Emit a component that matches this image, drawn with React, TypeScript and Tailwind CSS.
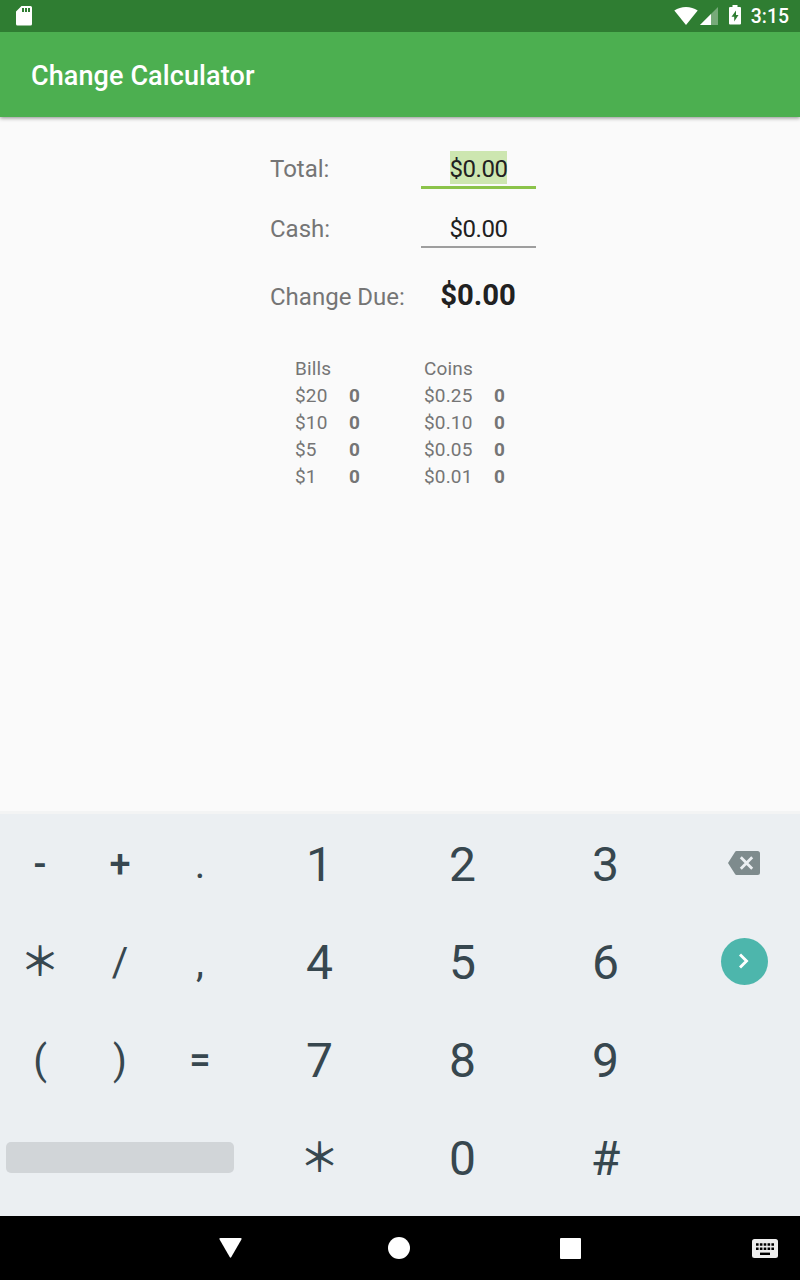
import type { ReactNode } from 'react'

const bills = ['$20', '$10', '$5', '$1']
const coins = ['$0.25', '$0.10', '$0.05', '$0.01']

const symbolRows = [
  ['-', '+', '.'],
  ['＊', '/', ','],
  ['(', ')', '='],
]

const digitRows = [
  ['1', '2', '3'],
  ['4', '5', '6'],
  ['7', '8', '9'],
  ['＊', '0', '#'],
]

function StatusBar() {
  return (
    <div className="h-8 bg-[#2f7d32] flex items-center justify-between pl-4 pr-[11px] text-white relative z-10">
      <svg className="w-4 h-5" viewBox="0 0 16 20" fill="currentColor">
        <path fillRule="evenodd" d="M5.5 0H14.5Q16 0 16 1.5V18Q16 19.6 14.5 19.6H1.5Q0 19.6 0 18V5.5ZM6 2V6H8V2ZM9 2V6H11V2ZM12 2V6H14V2Z" />
      </svg>
      <div className="flex items-center">
        <svg className="w-[24px] h-[18px]" viewBox="0 0 24 18" fill="currentColor">
          <path d="M12 18L.3 3.6Q5.5 0 12 0T23.7 3.6Z" />
        </svg>
        <svg className="w-[18px] h-[18px] ml-[2px]" viewBox="0 0 18 18" fill="currentColor">
          <path d="M0 18L18 0V18Z" opacity=".35" />
          <path d="M0 18L11 7V18Z" />
        </svg>
        <svg className="w-[12px] h-5 ml-[11px] mr-[10px] mb-[2px]" viewBox="0 0 12 20" fill="currentColor">
          <path fillRule="evenodd" d="M3.5 0H8.5V2H11Q12 2 12 3V18.5Q12 19.5 11 19.5H1Q0 19.5 0 18.5V3Q0 2 1 2H3.5ZM7 5.5L2.5 11.8H5.2V16.5L9.5 10H7Z" />
        </svg>
        <span className="text-[19.4px] leading-8 font-medium pt-px">3:15</span>
      </div>
    </div>
  )
}

function Breakdown({ title, items, labelWidth }: { title: string; items: string[]; labelWidth: string }) {
  return (
    <div className="text-[19px] leading-[27px] text-[#757575] tracking-[0.15px]">
      <div>{title}</div>
      {items.map((item) => (
        <div key={item} className="flex">
          <span className={labelWidth}>{item}</span>
          <span className="font-bold">0</span>
        </div>
      ))}
    </div>
  )
}

function KeyLabel({ label }: { label: string }) {
  if (label === '＊') {
    return <span className="font-['Noto_Sans_CJK_JP',sans-serif] text-[40px] leading-none font-medium pb-1">＊</span>
  }
  if ('-+='.includes(label)) {
    return <span className="text-[38px] font-medium pt-[3px]">{label}</span>
  }
  return <span className="pt-1">{label}</span>
}

function Key({ children }: { children: ReactNode }) {
  return <button className="h-[98px] flex items-center justify-center">{children}</button>
}

function Keyboard() {
  return (
    <div className="h-[402px] bg-[#ebeff2] flex text-[#37474f]">
      <div className="w-[240px] text-[40px]">
        <div className="grid grid-cols-3">
          {symbolRows.flat().map((key) => (
            <Key key={key}>
              <KeyLabel label={key} />
            </Key>
          ))}
        </div>
        <div className="h-[98px] px-1.5 flex items-center">
          <button className="w-full h-[31px] rounded-[5px] bg-[#d1d5d8]" />
        </div>
      </div>
      <div className="w-[429px] ml-2 grid grid-cols-3 content-start text-[48px]">
        {digitRows.flat().map((key) => (
          <Key key={key}>
            <KeyLabel label={key} />
          </Key>
        ))}
      </div>
      <div className="flex-1 flex flex-col items-center pl-[11px]">
        <Key>
          <svg className="w-8 h-6" viewBox="0 0 32 24">
            <path d="M8.5 0H29.5Q32 0 32 2.5V21.5Q32 24 29.5 24H8.5Q7.5 24 7 23L0 12L7 1Q7.5 0 8.5 0Z" fill="#7e8b8d" />
            <path d="M12.8 6.3L24.2 17.7M24.2 6.3L12.8 17.7" stroke="#ebeff2" strokeWidth="2.8" />
          </svg>
        </Key>
        <Key>
          <span className="size-[47px] rounded-full bg-[#4db6ac] flex items-center justify-center">
            <svg className="w-[10px] h-4" viewBox="0 0 10 16" fill="none">
              <path d="M1 1.5L7.5 8L1 14.5" stroke="#fff" strokeWidth="2.9" />
            </svg>
          </span>
        </Key>
      </div>
    </div>
  )
}

function NavBar() {
  return (
    <div className="h-16 bg-black flex items-center pl-[219px] pr-[22px] text-white">
      <svg className="w-[23px] h-5" viewBox="0 0 23 20" fill="currentColor">
        <path d="M1.5 0H21.5Q23.2 0 22.4 1.5L12.3 19Q11.5 20.3 10.7 19L.6 1.5Q-.2 0 1.5 0Z" />
      </svg>
      <span className="size-[22px] ml-[146px] rounded-full bg-white" />
      <span className="size-[21px] ml-[150px] rounded-[1px] bg-white" />
      <svg className="w-[26px] h-[19px] ml-auto mt-px" viewBox="0 0 26 19">
        <rect width="26" height="19" rx="2.5" fill="#eee" />
        <path d="M4 5.5H22M4 9.8H22" stroke="#000" strokeWidth="2.6" strokeDasharray="2.6 1.25" />
        <path d="M8 14.8H18" stroke="#000" strokeWidth="2.4" />
      </svg>
    </div>
  )
}

export default function App() {
  return (
    <div className="w-[800px] h-[1280px] flex flex-col bg-[#fafafa] font-[Roboto,sans-serif] overflow-hidden">
      <StatusBar />
      <header className="h-[85px] bg-[#4caf50] px-[31px] flex items-center shadow-[0_1px_4px_rgba(0,0,0,0.45)]">
        <h1 className="text-[27px] font-medium text-white pt-1 tracking-[0.1px]">Change Calculator</h1>
      </header>

      <main className="flex-1 pl-[270px]">
        <div className="text-[24px] text-[#757575] leading-[33px] pt-[34px]">
          <div className="flex h-[60px]">
            <label className="w-[151px] pt-[2px]">Total:</label>
            <div className="w-[115px] h-[38px] border-b-[3px] border-[#8bc34a] text-center text-[#212121]">
              <span className="inline-block h-[33px] leading-[37px] bg-[#cde6b0] tracking-[-0.5px]">$0.00</span>
            </div>
          </div>
          <div className="flex h-[60px]">
            <label className="w-[151px] pt-[2px]">Cash:</label>
            <div className="w-[115px] h-[37px] border-b-2 border-[#9e9e9e] text-center text-[#212121] leading-[37px] tracking-[-0.5px]">$0.00</div>
          </div>
          <div className="flex items-baseline pt-[8px]">
            <span className="w-[151px]">Change Due:</span>
            <span className="w-[114px] text-center text-[29.3px] font-bold text-[#212121]">$0.00</span>
          </div>
        </div>

        <div className="flex pl-[25px] pt-[41px]">
          <div className="w-[129px]">
            <Breakdown title="Bills" items={bills} labelWidth="w-[54px]" />
          </div>
          <Breakdown title="Coins" items={coins} labelWidth="w-[70px]" />
        </div>
      </main>

      <div className="h-[3px] bg-[#f3f4f4]" />
      <Keyboard />
      <NavBar />
    </div>
  )
}
